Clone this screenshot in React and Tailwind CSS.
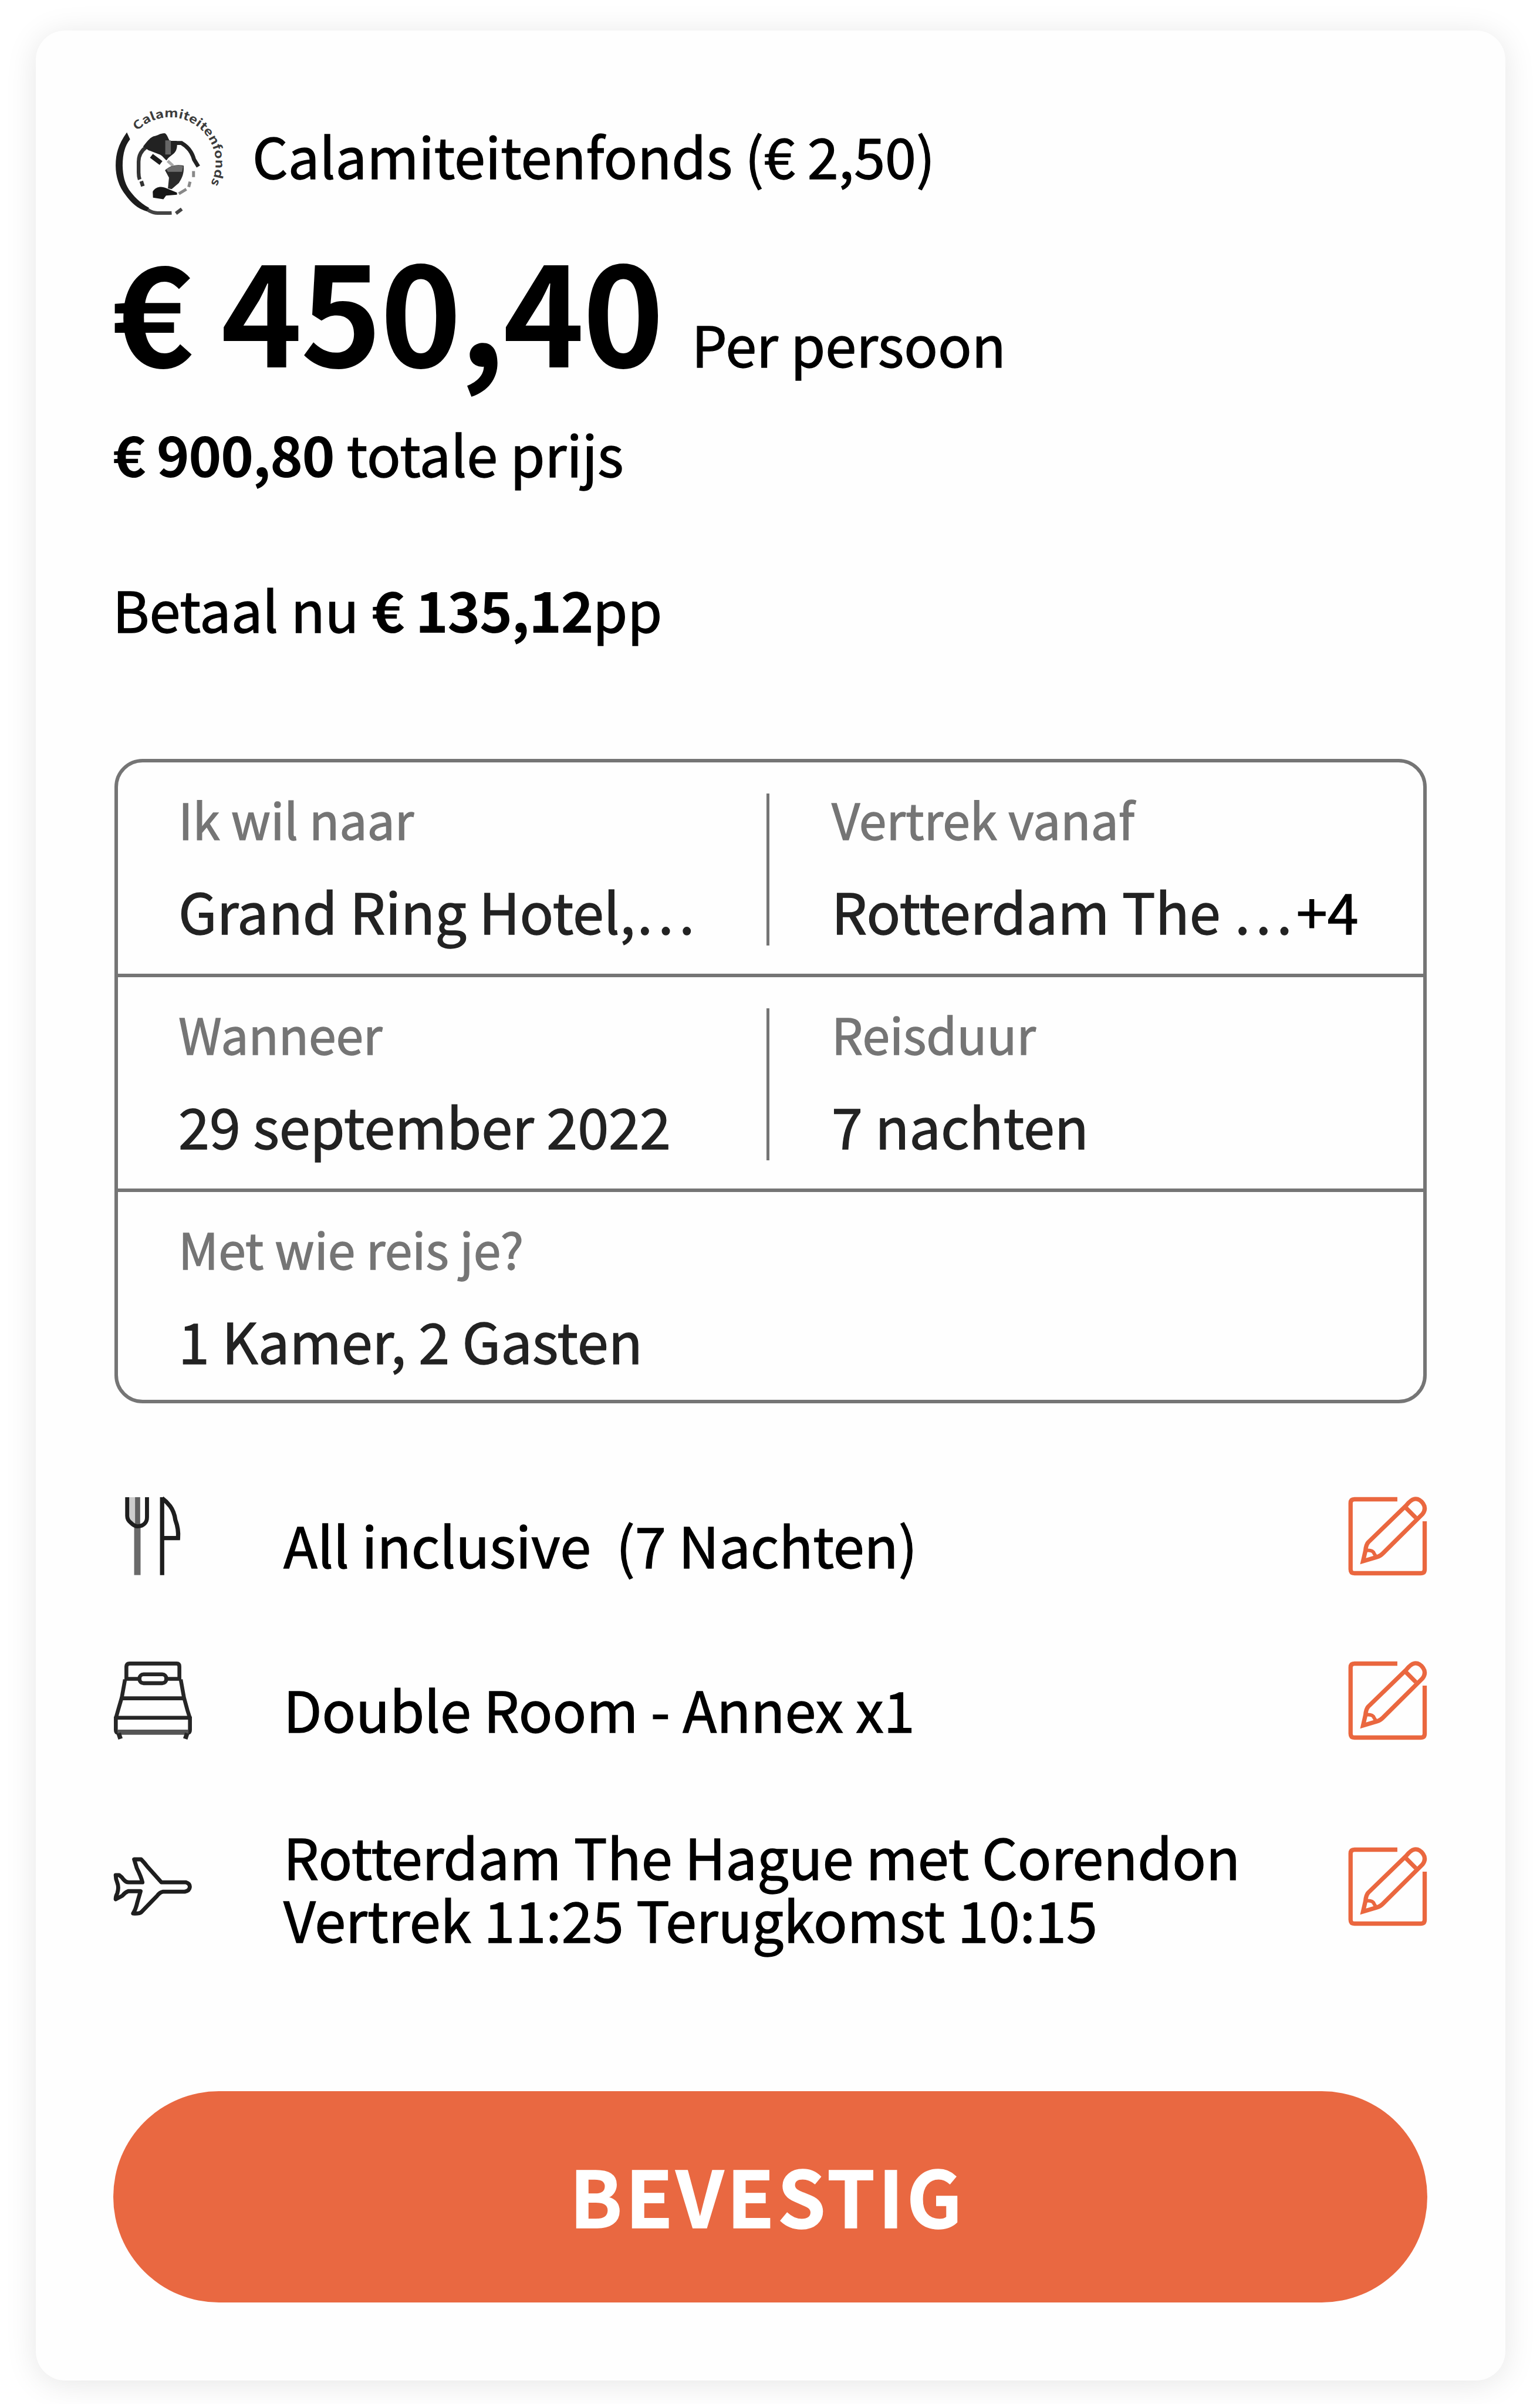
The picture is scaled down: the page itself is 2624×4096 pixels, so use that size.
function GlobeLogo() {
  return (
    <svg viewBox="128 120 832 784" className="w-[189px] h-[179px] shrink-0 overflow-visible" fill="none">
      {/* outer ring */}
      <path
        d="M230 270L254 322C210 380 199 440 198 520C200 596 214 650 246 700C284 750 320 792 396 836L384 864C306 842 262 796 222 742C170 678 146 600 146 520C146 420 172 352 230 270Z"
        fill="#1c1c1c"
      />
      <path d="M386 850Q420 874 460 875H530Q552 875 566 874M598 878L642 845" stroke="#444" strokeWidth="26" />
      {/* ring text */}
      <path id="ring" d="M308 260A338 338 0 1 1 798 740" />
      <text fontSize="88" fontWeight="700" fill="#3c3c3c">
        <textPath href="#ring" textLength="975" lengthAdjust="spacingAndGlyphs">Calamiteitenfonds</textPath>
      </text>
      {/* globe outline */}
      <path d="M400 366Q318 408 318 490V570Q318 602 326 624M338 636L350 674" stroke="#333" strokeWidth="28" />
      <path d="M560 350H640Q712 392 734 474L766 526" stroke="#222" strokeWidth="30" />
      <path d="M730 560V606M704 640L694 680M676 696L620 730" stroke="#888" strokeWidth="22" />
      {/* continents */}
      <path
        d="M352 376C380 340 400 312 430 300C460 294 480 276 512 276C532 280 536 310 552 334H604C610 370 606 400 590 420C570 444 544 452 528 480C510 470 496 440 470 434L392 404Z"
        fill="#222"
      />
      <path d="M518 330H560V436H518Z" fill="#666" />
      <path d="M414 446L486 500" stroke="#1c1c1c" strokeWidth="36" />
      <path d="M536 484L576 520" stroke="#aaa" strokeWidth="22" />
      <path d="M516 554C556 516 610 508 656 520C660 580 644 612 620 650L566 696L538 690L546 610Z" fill="#2a2a2a" />
      <path d="M526 548C570 516 610 512 652 524L644 566H538Z" fill="#6e6e6e" />
      <path d="M424 714C446 676 490 670 530 690L606 722V738L524 744L504 772L426 760Z" fill="#161616" />
    </svg>
  )
}

function CutleryIcon() {
  return (
    <svg viewBox="128 148 592 608" className="w-[135px] h-[139px] shrink-0" fill="none">
      <path d="M246 160H300V360L246 330Z" fill="#ccc" />
      <path d="M310 160V380" stroke="#606060" strokeWidth="38" />
      <path d="M308 380V742" stroke="#6a6a6a" strokeWidth="48" />
      <path d="M232 160V300Q232 330 258 350Q286 378 310 378Q345 378 364 356Q380 340 380 310V160" stroke="#1e1e1e" strokeWidth="30" />
      <path d="M493 160V742M493 466H612Q618 400 592 330Q584 270 552 226Q524 190 493 168" stroke="#1e1e1e" strokeWidth="32" />
    </svg>
  )
}

function BedIcon() {
  return (
    <svg viewBox="128 116 592 608" className="w-[135px] h-[139px] shrink-0" fill="none" stroke="#262626" strokeWidth="29">
      <path d="M226 266V166Q228 143 250 143H602Q622 143 622 166V266" />
      <path d="M226 258H320M526 258H624" />
      <rect x="324" y="224" width="200" height="66" rx="30" />
      <path d="M216 262L192 396L164 492L147 552M632 262L656 396L682 492L701 552" />
      <path d="M192 403H656M150 548H698" />
      <path d="M147 540V640Q147 660 166 660M701 540V640Q701 660 682 660" />
      <path d="M160 656H690" stroke="#555" strokeWidth="38" />
      <path d="M168 664L182 706M680 664L666 706" strokeWidth="34" />
    </svg>
  )
}

function PlaneIcon() {
  return (
    <svg viewBox="128 140 592 460" className="w-[135px] h-[105px] shrink-0" fill="none" strokeLinejoin="round">
      <path
        d="M488 338H672Q700 346 700 372Q698 400 662 408H500Q476 412 456 438L338 560Q322 574 276 570Q296 540 308 486L332 404H240Q214 414 196 438L146 464Q146 440 158 420Q172 376 158 340Q146 310 146 284H172Q190 296 206 318Q222 338 244 338H346Q334 290 304 232L284 166H336Q360 190 384 222Z"
        stroke="#1e1e1e"
        strokeWidth="30"
      />
    </svg>
  )
}

function EditIcon() {
  return (
    <svg viewBox="152 92 600 600" className="w-[137px] h-[137px] shrink-0" fill="none" stroke="#ea673f" strokeWidth="32">
      <path d="M524 116H204Q175 116 175 145V638Q175 668 204 668H698Q728 668 728 638V280" />
      <path d="M592 160L306 438Q290 456 286 500L268 578L374 546Q396 540 414 522L712 226Q742 186 716 148Q688 108 652 114Q624 120 592 160Z" />
      <path d="M586 178L662 254" />
      <path d="M288 498Q340 492 350 520L366 546" strokeWidth="26" />
    </svg>
  )
}

function Field({ label, value, extra, className = '' }) {
  return (
    <div className={className}>
      <p className="text-[84px] leading-[110px] text-[#757575]">{label}</p>
      <p className="mt-10 text-[95.3px] leading-[120px] text-[#222] whitespace-nowrap">
        {value}
        {extra && <span className="ml-[7px] text-black">{extra}</span>}
      </p>
    </div>
  )
}

function FieldRow({ left, right }) {
  return (
    <div className="flex h-[366px] border-b-[6px] border-[#757575]">
      <Field {...left} className="w-[1105px] pl-[103px] pt-[41px]" />
      <div className="mt-[53px] h-[259px] w-[5px] bg-[#757575]" />
      <Field {...right} className="pl-[106px] pt-[41px]" />
    </div>
  )
}

function Option({ icon, children, className = 'h-[139px]', textClassName = 'pt-6 leading-[120px]' }) {
  return (
    <div className={`flex items-center ${className}`}>
      {icon}
      <p className={`ml-[155px] flex-1 whitespace-pre ${textClassName}`}>{children}</p>
      <button type="button">
        <EditIcon />
      </button>
    </div>
  )
}

export default function App() {
  return (
    <div className="w-[2624px] h-[4096px] overflow-hidden bg-white pt-[52px] pl-[61px] font-['Noto_Sans_CJK_SC',sans-serif] text-[95.3px] text-black [-webkit-text-stroke-width:1.3px]">
      <div className="flex w-[2504px] h-[4004px] flex-col rounded-[50px] bg-[#fefefe] px-[132px] pt-[139px] shadow-[0_6px_54px_rgba(0,0,0,0.1)]">
        <div className="flex h-[179px]">
          <GlobeLogo />
          <p className="ml-[48px] mt-3 leading-[120px]">Calamiteitenfonds (€ 2,50)</p>
        </div>

        <div className="mt-6 flex h-[260px] items-baseline">
          <span className="-ml-[3px] text-[235px] font-bold leading-[260px] tracking-[-2.9px] [-webkit-text-stroke-width:0px]">€ 450,40</span>
          <span className="ml-[50px] leading-[120px]">Per persoon</span>
        </div>
        <p className="-ml-px mt-[57px] leading-[120px]">
          <b className="tracking-[-1.6px] [-webkit-text-stroke-width:0px]">€ 900,80</b> totale prijs
        </p>
        <p className="-ml-px mt-[145px] leading-[120px]">
          Betaal nu <b className="tracking-[-1.6px] [-webkit-text-stroke-width:0px]">€ 135,12</b>pp
        </p>

        {/* Trip details */}
        <div className="ml-[2px] mt-[197px] h-[1098px] w-[2236px] rounded-[48px] border-[6px] border-[#757575]">
          <FieldRow
            left={{ label: 'Ik wil naar', value: 'Grand Ring Hotel,…' }}
            right={{ label: 'Vertrek vanaf', value: 'Rotterdam The …', extra: '+4' }}
          />
          <FieldRow
            left={{ label: 'Wanneer', value: '29 september 2022' }}
            right={{ label: 'Reisduur', value: '7 nachten' }}
          />
          <Field label="Met wie reis je?" value="1 Kamer, 2 Gasten" className="pl-[103px] pt-[41px]" />
        </div>

        {/* Chosen options */}
        <div className="mt-[157px] flex flex-col gap-[141px]">
          <Option icon={<CutleryIcon />}>{'All inclusive  (7 Nachten)'}</Option>
          <Option icon={<BedIcon />}>Double Room - Annex x1</Option>
          <Option icon={<PlaneIcon />} className="h-[213px]" textClassName="leading-[106.5px]">
            Rotterdam The Hague met Corendon
            <br />
            Vertrek 11:25 Terugkomst 10:15
          </Option>
        </div>

        <button
          type="button"
          className="mt-[242px] h-[360px] w-[2239px] rounded-full bg-[#e96841] pb-2 pr-[10px] text-[132px] font-bold tracking-[5px] text-white"
        >
          BEVESTIG
        </button>
      </div>
    </div>
  )
}
